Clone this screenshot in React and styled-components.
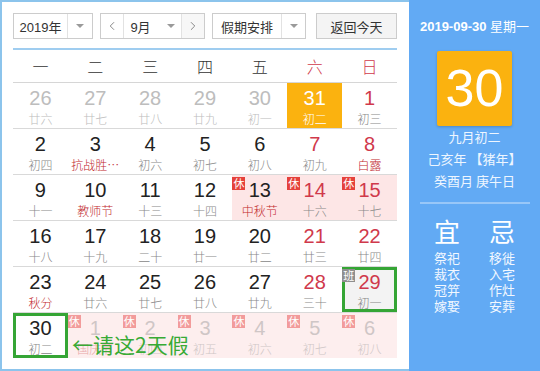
import React from 'react';
import styled, { createGlobalStyle, css } from 'styled-components';
import { ChevronLeft, ChevronRight } from 'lucide-react';

const GlobalStyle = createGlobalStyle`
  html, body { margin: 0; padding: 0; background: #fff; }
  body { font-family: "Liberation Sans", "Noto Sans CJK SC", sans-serif; }
`;

const Frame = styled.div`
  width: 540px;
  height: 371px;
  display: flex;
  background: #62aaf4;
`;

const LeftPanel = styled.div`
  width: 409px;
  height: 371px;
  box-sizing: border-box;
  background: #fff;
  border: 2px solid #8cc4ec;
  border-right: none;
  padding: 11px 12px 10px 11px;
`;

const Toolbar = styled.div`
  display: flex;
  height: 26px;
  font-size: 13px;
  color: #333;
`;

const Select = styled.div`
  display: flex;
  width: ${p => p.w}px;
  margin-right: ${p => p.gap || 0}px;
  box-sizing: border-box;
  border: 1px solid #ccc;
  background: ${p => (p.button ? '#f4f4f4' : '#fff')};
  align-items: stretch;
  justify-content: center;
`;

const Label = styled.div`
  flex: 1;
  display: flex;
  align-items: center;
  justify-content: center;
  gap: 16px;
`;

const Part = styled.div`
  width: ${p => p.w}px;
  display: flex;
  align-items: center;
  justify-content: center;
  border-${p => p.side || 'left'}: 1px solid #e2e2e2;
  background: ${p => p.bg || 'transparent'};
  color: #777;
`;

const Caret = styled.span`
  width: 0;
  height: 0;
  border-left: 4px solid transparent;
  border-right: 4px solid transparent;
  border-top: 4px solid #9a9a9a;
`;

const BlueLine = styled.div`
  height: 2px;
  margin-top: 9px;
  background: #9fcdf0;
`;

const Header = styled.div`
  display: grid;
  grid-template-columns: repeat(7, 1fr);
  height: 32px;
  border-bottom: 1px solid #d6d6d6;
`;

const Weekday = styled.div`
  display: flex;
  align-items: center;
  justify-content: center;
  font-family: "Noto Sans CJK SC", sans-serif;
  font-size: 16px;
  font-weight: 300;
  color: ${p => (p.red ? '#d0394b' : '#333')};
`;

const Week = styled.div`
  position: relative;
  display: grid;
  grid-template-columns: repeat(7, 1fr);
  height: 45px;
  border-bottom: ${p => (p.last ? 'none' : '1px solid #d9d9d9')};
`;

const tones = {
  prev: { num: '#bdbdbd', lunar: '#bdbdbd' },
  normal: { num: '#222', lunar: '#888' },
  weekend: { num: '#d0394b', lunar: '#888' },
  today: { num: '#fff', lunar: '#fff' },
  next: { num: '#cfc6c6', lunar: '#cfc6c6' },
};

const Cell = styled.div`
  position: relative;
  display: flex;
  flex-direction: column;
  align-items: center;
  box-sizing: border-box;
  padding-top: 4px;
  background: ${p =>
    p.tone === 'today' ? '#fbb20f' : p.rest ? (p.tone === 'next' ? '#fdeeee' : '#fde6e6') : p.work ? '#f3f3f3' : 'transparent'};
  ${p =>
    p.boxed &&
    css`
      box-shadow: inset 0 0 0 3px #35a535;
    `}
`;

const Num = styled.div`
  font-size: 20px;
  line-height: 22px;
  color: ${p => tones[p.tone].num};
`;

const Lunar = styled.div`
  margin-top: 2px;
  font-family: "Noto Sans CJK SC", sans-serif;
  font-size: 12px;
  line-height: 16px;
  font-weight: 300;
  color: ${p => (p.fest ? (p.tone === 'next' ? '#e8a8a8' : '#c1272d') : tones[p.tone].lunar)};
  white-space: nowrap;
`;

const Badge = styled.span`
  position: absolute;
  left: 0;
  top: 2px;
  width: 13px;
  height: 13px;
  font-family: "Noto Sans CJK SC", sans-serif;
  font-size: 11px;
  line-height: 13px;
  text-align: center;
  color: #fff;
  background: ${p => (p.work ? '#8f8f8f' : p.faded ? '#f29b9b' : '#e5413b')};
`;

const Hint = styled.div`
  position: absolute;
  left: 59px;
  top: 19px;
  font-family: "Noto Sans CJK SC", sans-serif;
  font-size: 21px;
  line-height: 24px;
  color: #38aa35;
  pointer-events: none;
`;

const RightPanel = styled.div`
  flex: 1;
  display: flex;
  flex-direction: column;
  align-items: center;
  padding-top: 19px;
  color: #fff;
`;

const DateLine = styled.div`
  font-size: 13px;
  line-height: 16px;
  b { font-weight: bold; }
`;

const BigDay = styled.div`
  margin-top: 16px;
  width: 75px;
  height: 75px;
  border-radius: 2px;
  background: #fbb20f;
  box-shadow: 0 1px 3px rgba(0, 0, 0, 0.2);
  font-size: 52px;
  line-height: 75px;
  text-align: center;
`;

const LunarInfo = styled.div`
  margin-top: 0;
  font-family: "Noto Sans CJK SC", sans-serif;
  font-size: 13px;
  line-height: 22px;
  text-align: center;
  color: #eef6ff;
`;

const Sep = styled.div`
  margin-top: 10px;
  width: 110px;
  height: 2px;
  background: rgba(255, 255, 255, 0.35);
`;

const Almanac = styled.div`
  margin-top: 12px;
  display: grid;
  grid-template-columns: 55px 55px;
  font-family: "Noto Sans CJK SC", sans-serif;
  text-align: center;
`;

const AlmanacTitle = styled.div`
  font-size: 26px;
  line-height: 30px;
  margin-bottom: 4px;
`;

const AlmanacItem = styled.div`
  font-size: 13px;
  line-height: 16px;
  color: #f2f8ff;
`;

const weekdays = ['一', '二', '三', '四', '五', '六', '日'];

const weeks = [
  [
    { d: 26, l: '廿六', t: 'prev' },
    { d: 27, l: '廿七', t: 'prev' },
    { d: 28, l: '廿八', t: 'prev' },
    { d: 29, l: '廿九', t: 'prev' },
    { d: 30, l: '初一', t: 'prev' },
    { d: 31, l: '初二', t: 'today' },
    { d: 1, l: '初三', t: 'weekend' },
  ],
  [
    { d: 2, l: '初四' },
    { d: 3, l: '抗战胜…', fest: true },
    { d: 4, l: '初六' },
    { d: 5, l: '初七' },
    { d: 6, l: '初八' },
    { d: 7, l: '初九', t: 'weekend' },
    { d: 8, l: '白露', t: 'weekend', fest: true },
  ],
  [
    { d: 9, l: '十一' },
    { d: 10, l: '教师节', fest: true },
    { d: 11, l: '十三' },
    { d: 12, l: '十四' },
    { d: 13, l: '中秋节', fest: true, rest: true },
    { d: 14, l: '十六', t: 'weekend', rest: true },
    { d: 15, l: '十七', t: 'weekend', rest: true },
  ],
  [
    { d: 16, l: '十八' },
    { d: 17, l: '十九' },
    { d: 18, l: '二十' },
    { d: 19, l: '廿一' },
    { d: 20, l: '廿二' },
    { d: 21, l: '廿三', t: 'weekend' },
    { d: 22, l: '廿四', t: 'weekend' },
  ],
  [
    { d: 23, l: '秋分', fest: true },
    { d: 24, l: '廿六' },
    { d: 25, l: '廿七' },
    { d: 26, l: '廿八' },
    { d: 27, l: '廿九' },
    { d: 28, l: '三十', t: 'weekend' },
    { d: 29, l: '初一', t: 'weekend', work: true, boxed: true },
  ],
  [
    { d: 30, l: '初二', boxed: true },
    { d: 1, l: '国庆节', t: 'next', fest: true, rest: true },
    { d: 2, l: '初四', t: 'next', rest: true },
    { d: 3, l: '初五', t: 'next', rest: true },
    { d: 4, l: '初六', t: 'next', rest: true },
    { d: 5, l: '初七', t: 'next', rest: true },
    { d: 6, l: '初八', t: 'next', rest: true },
  ],
];

const yi = ['祭祀', '裁衣', '冠笄', '嫁娶'];
const ji = ['移徙', '入宅', '作灶', '安葬'];

function DayCell({ day }) {
  const tone = day.t || 'normal';
  return (
    <Cell tone={tone} rest={day.rest} work={day.work} boxed={day.boxed}>
      {day.rest && <Badge faded={tone === 'next'}>休</Badge>}
      {day.work && <Badge work>班</Badge>}
      <Num tone={tone}>{day.d}</Num>
      <Lunar tone={tone} fest={day.fest}>{day.l}</Lunar>
    </Cell>
  );
}

export default function App() {
  return (
    <>
      <GlobalStyle />
      <Frame>
        <LeftPanel>
          <Toolbar>
            <Select w={80} gap={7}>
              <Label>2019年</Label>
              <Part w={24}><Caret /></Part>
            </Select>
            <Select w={105} gap={7}>
              <Part w={22} side="right"><ChevronLeft size={14} strokeWidth={1.5} /></Part>
              <Label>9月<Caret /></Label>
              <Part w={22} bg="#f7f7f7"><ChevronRight size={14} strokeWidth={1.5} /></Part>
            </Select>
            <Select w={94} gap={10}>
              <Label>假期安排</Label>
              <Part w={23}><Caret /></Part>
            </Select>
            <Select w={81} button>
              <Label>返回今天</Label>
            </Select>
          </Toolbar>
          <BlueLine />
          <Header>
            {weekdays.map((w, i) => (
              <Weekday key={w} red={i >= 5}>{w}</Weekday>
            ))}
          </Header>
          {weeks.map((week, wi) => (
            <Week key={wi} last={wi === weeks.length - 1}>
              {week.map((day, di) => (
                <DayCell key={di} day={day} />
              ))}
              {wi === weeks.length - 1 && <Hint>←请这2天假</Hint>}
            </Week>
          ))}
        </LeftPanel>
        <RightPanel>
          <DateLine><b>2019-09-30</b> 星期一</DateLine>
          <BigDay>30</BigDay>
          <LunarInfo>
            <div>九月初二</div>
            <div>己亥年 【猪年】</div>
            <div>癸酉月 庚午日</div>
          </LunarInfo>
          <Sep />
          <Almanac>
            <div>
              <AlmanacTitle>宜</AlmanacTitle>
              {yi.map(x => <AlmanacItem key={x}>{x}</AlmanacItem>)}
            </div>
            <div>
              <AlmanacTitle>忌</AlmanacTitle>
              {ji.map(x => <AlmanacItem key={x}>{x}</AlmanacItem>)}
            </div>
          </Almanac>
        </RightPanel>
      </Frame>
    </>
  );
}
